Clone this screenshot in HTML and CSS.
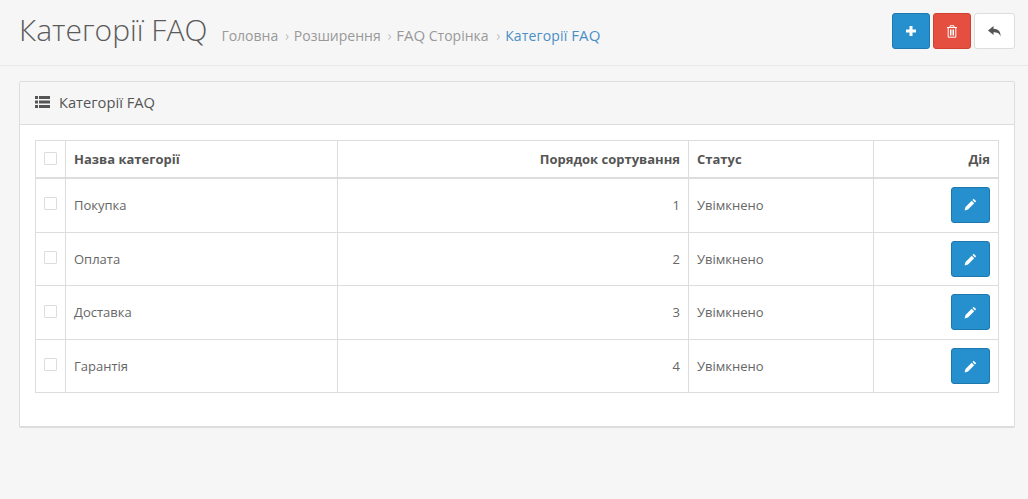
FILE: index.html
```html
<!DOCTYPE html>
<html lang="uk">
<head>
<meta charset="utf-8">
<title>Категорії FAQ</title>
<link rel="stylesheet" href="styles.css">
</head>
<body>
<header class="page-header">
  <div class="title-group">
    <h1>Категорії FAQ</h1>
    <ul class="breadcrumb">
      <li>Головна</li>
      <li><span class="sep">›</span>Розширення</li>
      <li><span class="sep">›</span><span class="lat">FAQ</span> Сторінка</li>
      <li class="last"><span class="sep">›</span><span class="cur-text">Категорії <span class="lat">FAQ</span></span></li>
    </ul>
  </div>
  <div class="actions">
    <button class="btn btn-primary"><svg width="12" height="12" viewBox="0 0 12 12"><path d="M4.500 1h3v3.500H11v3H7.500V11h-3V7.500H1v-3h3.500z" fill="#fff"/></svg></button>
    <button class="btn btn-danger"><svg width="12" height="13" viewBox="0 0 12 13"><path d="M4 2V.8h4V2M1 2.500h10M2.200 2.500v9.700h7.600V2.500M4.500 4.500v6M6 4.500v6M7.500 4.500v6" fill="none" stroke="#fff" stroke-width="1"/></svg></button>
    <button class="btn btn-default"><svg width="15" height="13" viewBox="0 0 15 13"><path d="M6.500 1 1 5.500 6.500 10V7.200c3.500 0 5.800.6 7 4.300C14 6.500 11 3.900 6.500 3.800z" fill="#555"/></svg></button>
  </div>
</header>
<main class="content">
  <section class="panel">
    <div class="panel-heading">
      <svg width="15" height="12" viewBox="0 0 15 12"><path d="M0 0h3v3H0zM4 0h11v3H4zM0 4.500h3v3H0zM4 4.500h11v3H4zM0 9h3v3H0zM4 9h11v3H4z" fill="#555"/></svg>
      <h3>Категорії FAQ</h3>
    </div>
    <div class="panel-body">
      <table>
        <thead>
          <tr>
            <th class="c-check"><span class="check"></span></th>
            <th class="c-name">Назва категорії</th>
            <th class="c-sort num">Порядок сортування</th>
            <th class="c-status">Статус</th>
            <th class="c-act num">Дія</th>
          </tr>
        </thead>
        <tbody>
          <tr class="row-first"><td><span class="check"></span></td><td>Покупка</td><td class="num">1</td><td>Увімкнено</td><td class="num act"><button class="btn btn-primary btn-edit"><svg width="13" height="13" viewBox="0 0 13 13"><path d="M9.700.8 12.200 3.300 11 4.500 8.500 2zM7.700 2.800 10.200 5.300 4 11.500.6 12.400 1.500 9z" fill="#fff"/></svg></button></td></tr>
          <tr class="row-b"><td><span class="check"></span></td><td>Оплата</td><td class="num">2</td><td>Увімкнено</td><td class="num act"><button class="btn btn-primary btn-edit"><svg width="13" height="13" viewBox="0 0 13 13"><path d="M9.700.8 12.200 3.300 11 4.500 8.500 2zM7.700 2.800 10.200 5.300 4 11.500.6 12.400 1.500 9z" fill="#fff"/></svg></button></td></tr>
          <tr class="row-a"><td><span class="check"></span></td><td>Доставка</td><td class="num">3</td><td>Увімкнено</td><td class="num act"><button class="btn btn-primary btn-edit"><svg width="13" height="13" viewBox="0 0 13 13"><path d="M9.700.8 12.200 3.300 11 4.500 8.500 2zM7.700 2.800 10.200 5.300 4 11.500.6 12.400 1.500 9z" fill="#fff"/></svg></button></td></tr>
          <tr class="row-b"><td><span class="check"></span></td><td>Гарантія</td><td class="num">4</td><td>Увімкнено</td><td class="num act"><button class="btn btn-primary btn-edit"><svg width="13" height="13" viewBox="0 0 13 13"><path d="M9.700.8 12.200 3.300 11 4.500 8.500 2zM7.700 2.800 10.200 5.300 4 11.500.6 12.400 1.500 9z" fill="#fff"/></svg></button></td></tr>
        </tbody>
      </table>
    </div>
  </section>
</main>
</body>
</html>
```
FILE: styles.css
```css
* { box-sizing: border-box; }
html, body { margin: 0; padding: 0; }
body { background: #f6f6f6; font-family: "Open Sans", sans-serif; font-size: 13px; color: #666; height: 499px; overflow: hidden; }
.page-header { height: 66px; padding: 13px 13px 0 19px; border-bottom: 1px solid #e9e9e9; display: flex; justify-content: space-between; align-items: flex-start; }
.title-group { display: flex; align-items: baseline; margin-top: -1px; }
h1 { margin: 0; font-size: 30px; font-weight: 300; color: #5a5a5a; line-height: 36px; }
.breadcrumb { list-style: none; margin: 0 0 0 14px; padding: 0; display: flex; align-items: baseline; font-size: 14px; color: #999; }
.breadcrumb li { margin-right: 8px; }
.breadcrumb .last { margin-left: 1px; }
.sep { margin-right: 5px; margin-left: -1px; font-weight: 300; color: #aaa; }
.lat { font-size: 15px; line-height: 1; }
.cur-text { color: #4a8fc4; letter-spacing: .15px; }
.actions { display: flex; gap: 3px; }
.btn { display: flex; align-items: center; justify-content: center; padding: 0; width: 38px; height: 36px; border-radius: 3px; border: 1px solid; }
.btn-primary { background: #268fcd; border-color: #1d78ad; }
.btn-danger { background: #e44f40; border-color: #d0412f; }
.btn-default { background: #fff; border-color: #ddd; width: 41px; }
.btn-edit { width: 39px; }
.content { padding: 15px 13px 0 19px; }
.panel { background: #fff; border: 1px solid #dddddd; border-bottom-width: 2px; border-radius: 2px; height: 347px; }
.panel-heading { height: 43px; background: #f6f6f6; border-bottom: 1px solid #ddd; padding: 0 15px 2px; display: flex; align-items: center; gap: 9px; }
h3 { margin: 0; font-size: 14.700px; font-weight: 400; color: #555; }
.panel-body { padding: 15px; }
table { width: 100%; border-collapse: collapse; table-layout: fixed; border: 1px solid #ddd; }
th, td { border: 1px solid #ddd; padding: 0 8px; text-align: left; font-size: 13px; }
th { height: 37px; padding-bottom: 0; font-weight: 700; color: #555; border-bottom-width: 2px; }
td { color: #666; padding-bottom: 1px; }
.row-first td { height: 55px; }
.row-a td { height: 54px; }
.row-b td { height: 53px; }
.num { text-align: right; }
td.act { vertical-align: top; padding-top: 8px; padding-bottom: 0; }
td .btn { display: inline-flex; }
.c-check { width: 30px; padding: 0; text-align: center; }
td:first-child { text-align: center; padding: 0 0 2px; }
.c-name { width: 272px; }
.c-sort { width: 351px; }
.c-status { width: 185px; }
.check { display: inline-block; width: 13px; height: 13px; border: 1px solid #ddd; border-radius: 1px; background: #fff; vertical-align: middle; position: relative; top: -2px; }
```
